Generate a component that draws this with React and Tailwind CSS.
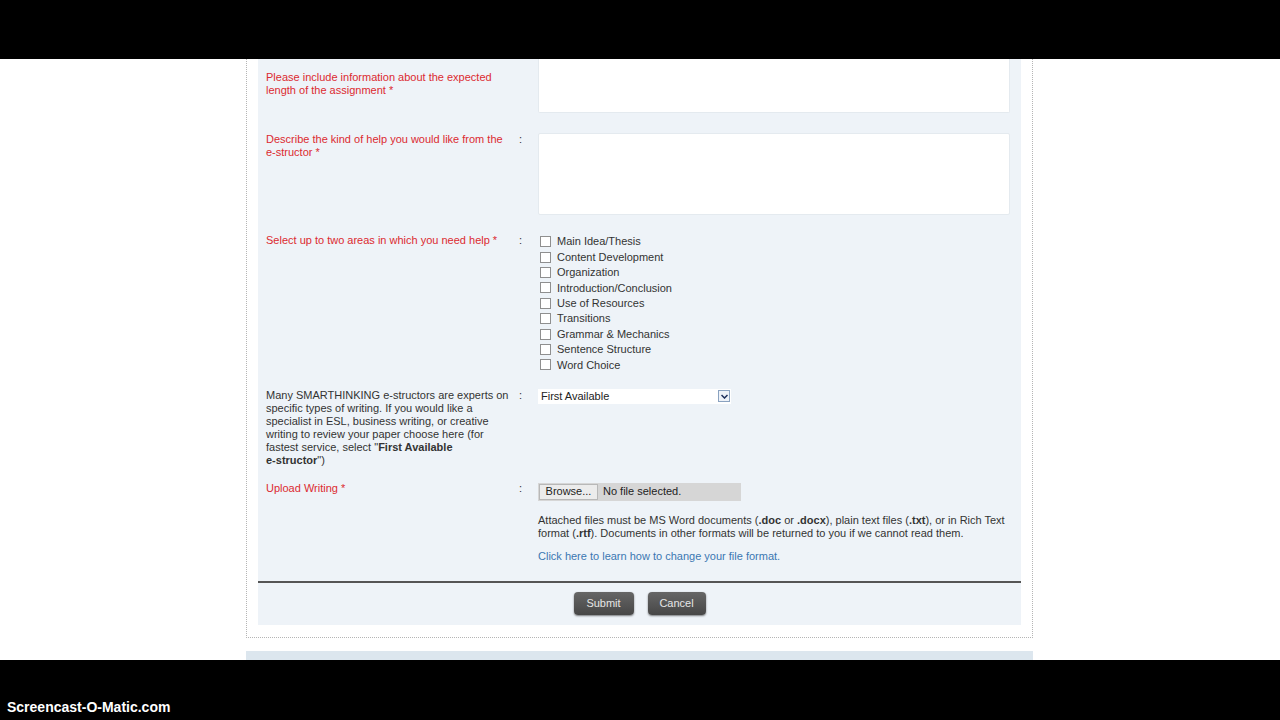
const areas = [
  "Main Idea/Thesis",
  "Content Development",
  "Organization",
  "Introduction/Conclusion",
  "Use of Resources",
  "Transitions",
  "Grammar & Mechanics",
  "Sentence Structure",
  "Word Choice",
];

const Colon = ({ className = "" }) => (
  <div className={`text-[11px] leading-[13px] text-[#333] ${className}`}>:</div>
);

const App = () => {
  return (
    <div
      className="w-[1280px] h-[720px] bg-black flex flex-col overflow-hidden"
      style={{ fontFamily: '"Liberation Sans", Arial, sans-serif' }}
    >
      {/* recorder frame, top */}
      <div className="h-[59px] shrink-0 bg-black"></div>

      {/* page area */}
      <div className="h-[601px] shrink-0 bg-white overflow-hidden">
        <div className="w-[787px] ml-[246px] border-x border-b border-dotted border-[#b5b5b5] px-[11px] pb-[12px]">
          <div className="bg-[#eef3f8]">
            <div className="pl-2 pr-[10px]">
              {/* expected length */}
              <div className="grid grid-cols-[253px_19px_472px] items-start">
                <div className="pt-[12px] text-[11px] leading-[13px] text-[#dc2a30]">
                  Please include information about the expected length of the assignment *
                </div>
                <div></div>
                <div className="h-[54px] bg-white border border-t-0 border-[#e4eaef] rounded-b-[2px]"></div>
              </div>

              {/* kind of help */}
              <div className="grid grid-cols-[253px_19px_472px] items-start mt-[20px]">
                <div className="text-[11px] leading-[13px] text-[#dc2a30] pr-2">
                  Describe the kind of help you would like from the e-structor *
                </div>
                <Colon />
                <div className="h-[82px] bg-white border border-[#e4eaef] rounded-[2px]"></div>
              </div>

              {/* help areas */}
              <div className="grid grid-cols-[253px_19px_472px] items-start mt-[19px]">
                <div className="text-[11px] leading-[13px] text-[#dc2a30]">
                  Select up to two areas in which you need help *
                </div>
                <Colon />
                <div className="flex flex-col">
                  {areas.map((a) => (
                    <label key={a} className="flex items-center h-[15.4px] text-[11px] text-[#333]">
                      <span className="ml-[2px] mr-[6px] w-[11px] h-[11px] bg-white border border-[#8f8f8f]"></span>
                      {a}
                    </label>
                  ))}
                </div>
              </div>

              {/* specialist */}
              <div className="grid grid-cols-[253px_19px_472px] items-start mt-[16px]">
                <div className="text-[11px] leading-[13px] text-[#333]">
                  Many SMARTHINKING e-structors are experts on specific types of writing. If you would like a
                  specialist in ESL, business writing, or creative writing to review your paper choose here (for
                  fastest service, select "<b>First Available</b>
                  <br />
                  <b>e-structor</b>")
                </div>
                <div className="text-[11px] leading-[13px] text-[#333]">:</div>
                <div className="w-[193px] h-[15px] bg-white flex items-center justify-between">
                  <span className="pl-[3px] text-[11px] text-[#222]">First Available</span>
                  <span className="w-[12px] h-[12px] mr-[1px] border border-[#8aa2c0] bg-[#eef2f8] flex items-center justify-center">
                    <svg width="7" height="5" viewBox="0 0 7 5">
                      <path d="M0.5 1 L3.5 4 L6.5 1" fill="none" stroke="#1c2f5a" strokeWidth="1.5" />
                    </svg>
                  </span>
                </div>
              </div>

              {/* upload */}
              <div className="grid grid-cols-[253px_19px_472px] items-start mt-[15px]">
                <div className="text-[11px] leading-[13px] text-[#dc2a30]">Upload Writing *</div>
                <Colon />
                <div>
                  <div className="mt-[1px] w-[203px] h-[18px] bg-[#d6d6d6] flex items-center">
                    <span className="ml-[1px] h-[16px] w-[59px] bg-[#ececec] border border-[#b8b8b8] text-[11px] text-[#222] flex items-center justify-center">
                      Browse...
                    </span>
                    <span className="ml-[5px] text-[11px] text-[#222]">No file selected.</span>
                  </div>
                  <p className="mt-[13px] text-[11px] leading-[13px] text-[#333]">
                    Attached files must be MS Word documents (<b>.doc</b> or <b>.docx</b>), plain text files (<b>.txt</b>),
                    or in Rich Text format (<b>.rtf</b>). Documents in other formats will be returned to you if we cannot
                    read them.
                  </p>
                  <a className="block mt-[10px] text-[11px] leading-[13px] text-[#3b77b2]">
                    Click here to learn how to change your file format.
                  </a>
                </div>
              </div>
            </div>

            <div className="mt-[18px] h-[2px] bg-[#555]"></div>

            <div className="flex justify-center gap-[14px] pt-[9px] pb-[10px]">
              <button className="w-[60px] h-[23px] rounded-[4px] bg-gradient-to-b from-[#666] to-[#474747] text-[11px] text-[#e6e6e6] shadow-[0_1px_2px_rgba(0,0,0,0.5)]">
                Submit
              </button>
              <button className="w-[58px] h-[23px] rounded-[4px] bg-gradient-to-b from-[#666] to-[#474747] text-[11px] text-[#e6e6e6] shadow-[0_1px_2px_rgba(0,0,0,0.5)]">
                Cancel
              </button>
            </div>
          </div>
        </div>

        {/* footer strip, mostly below the frame */}
        <div className="w-[787px] ml-[246px] mt-[13px] h-[30px] bg-[#dce6ee]"></div>
      </div>

      {/* recorder frame, bottom */}
      <div className="h-[60px] shrink-0 bg-black flex items-end pl-[7px] pb-[3px]">
        <span className="text-white font-bold text-[14px] leading-[20px]">Screencast-O-Matic.com</span>
      </div>
    </div>
  );
};

export default App;
